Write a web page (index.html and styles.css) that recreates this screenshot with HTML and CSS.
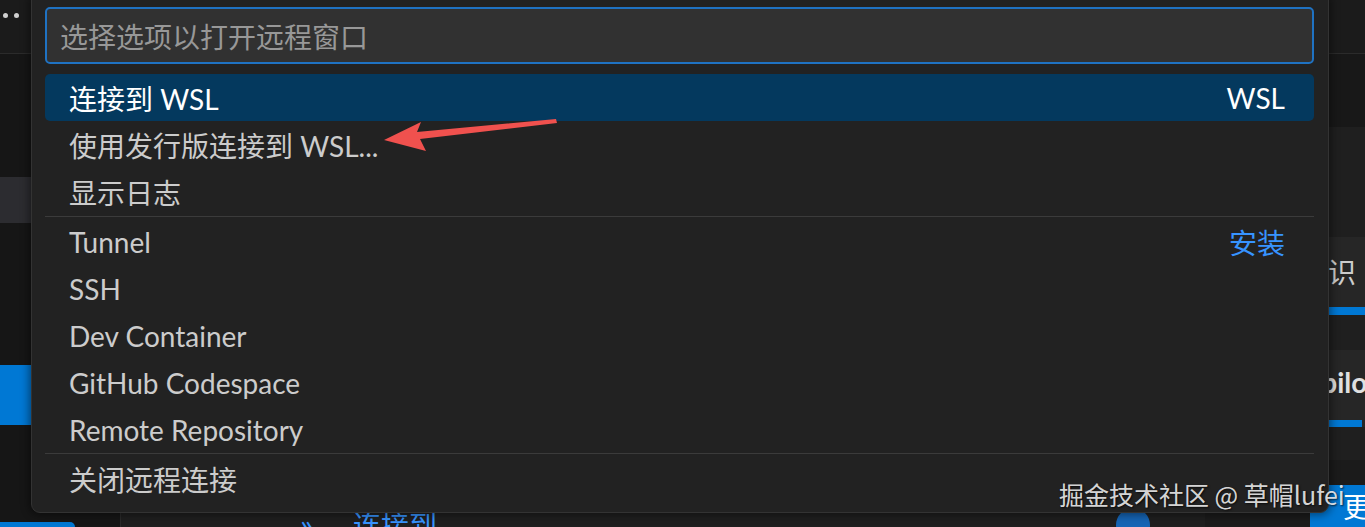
FILE: index.html
```html
<!DOCTYPE html>
<html lang="zh-CN">
<head>
<meta charset="utf-8">
<title>Remote Quick Pick</title>
<link rel="stylesheet" href="styles.css">
</head>
<body>
<div class="app">
  <aside class="sidebar">
    <div class="sb-top"><span class="dot"></span><span class="dot"></span></div>
    <div class="sb-hover"></div>
    <div class="sb-active"></div>
    <div class="sb-btn"></div>
  </aside>
  <main class="editor">
    <div class="tabs"></div>
    <div class="editor-body">
      <div class="content">
        <div class="link-row"><span class="chev">»</span><span class="link-text">连接到</span><span class="avatar"></span></div>
      </div>
      <div class="right-pane">
        <div class="rp-top"></div>
        <div class="rp-card c1"><div class="rp-text">知识</div><div class="rp-bar"></div></div>
        <div class="rp-card c2"><div class="rp-text bold">Copilot</div><div class="rp-bar short"></div></div>
        <div class="rp-card c3"><div class="rp-btn">更新</div></div>
      </div>
    </div>
  </main>
</div>

<div class="quickpick">
  <div class="qp-input">选择选项以打开远程窗口</div>
  <div class="qp-list">
    <div class="qp-row selected"><span class="label">连接到 WSL</span><span class="kb">WSL</span></div>
    <div class="qp-row"><span class="label">使用发行版连接到 WSL...</span></div>
    <div class="qp-row"><span class="label">显示日志</span></div>
    <div class="qp-sep"></div>
    <div class="qp-row"><span class="label">Tunnel</span><span class="action">安装</span></div>
    <div class="qp-row"><span class="label">SSH</span></div>
    <div class="qp-row"><span class="label">Dev Container</span></div>
    <div class="qp-row"><span class="label">GitHub Codespace</span></div>
    <div class="qp-row"><span class="label">Remote Repository</span></div>
    <div class="qp-sep second"></div>
    <div class="qp-row"><span class="label">关闭远程连接</span></div>
  </div>
</div>

<svg class="arrow" width="1365" height="527" viewBox="0 0 1365 527" xmlns="http://www.w3.org/2000/svg">
  <polygon points="384,140 421,122 417,132 556,119 557,123 420,139 426,151" fill="#f0514e"/>
</svg>

<div class="watermark">掘金技术社区 @ 草帽lufei</div>
</body>
</html>
```

FILE: styles.css
```css
* { box-sizing: border-box; }

html, body {
  margin: 0;
  padding: 0;
  width: 1365px;
  height: 527px;
  overflow: hidden;
  background: #1f1f1f;
  font-family: "Lato", "Noto Sans CJK SC", sans-serif;
}

.app {
  display: flex;
  width: 1365px;
  height: 527px;
  overflow: hidden;
}

/* ---------- sidebar (background app) ---------- */
.sidebar {
  width: 121px;
  flex: none;
  display: flex;
  flex-direction: column;
  background: #161616;
  border-right: 1px solid #2b2b2b;
}

.sb-top {
  height: 54px;
  flex: none;
  display: flex;
  gap: 6px;
  padding: 13px 0 0 3px;
  background: #1b1b1b;
  border-bottom: 1px solid #2b2b2b;
}

.dot {
  width: 5px;
  height: 5px;
  border-radius: 50%;
  background: #d0d0d0;
}

.sb-hover {
  margin-top: 123px;
  height: 46px;
  flex: none;
  background: #2c2c30;
}

.sb-active {
  margin-top: 142px;
  height: 60px;
  flex: none;
  background: #0078d4;
}

.sb-btn {
  margin-top: auto;
  width: 75px;
  height: 5px;
  flex: none;
  background: #0078d4;
  border-radius: 0 6px 0 0;
}

/* ---------- editor (background app) ---------- */
.editor {
  flex: 1;
  display: flex;
  flex-direction: column;
  min-width: 0;
}

.tabs {
  height: 54px;
  flex: none;
  background: #1b1b1b;
  border-bottom: 1px solid #2b2b2b;
}

.editor-body {
  flex: 1;
  display: flex;
  min-height: 0;
  overflow: hidden;
}

.content {
  flex: 1;
  background: #1f1f1f;
  padding: 451px 0 0 179px;
  overflow: hidden;
}

.link-row {
  display: flex;
  align-items: flex-start;
  font-size: 28px;
  line-height: 40px;
  color: #3794ff;
}

.chev { font-size: 32px; width: 53px; }

.avatar {
  margin: 3px 55px 0 auto;
  width: 34px;
  height: 34px;
  border-radius: 50%;
  background: #1665b5;
}

.right-pane {
  width: 160px;
  flex: none;
  display: flex;
  flex-direction: column;
  background: #1f1f1f;
  color: #cccccc;
  font-size: 28px;
}

.rp-top {
  height: 73px;
  flex: none;
  background: #181818;
}

.rp-card {
  flex: none;
  background: #262626;
  display: flex;
  flex-direction: column;
}

.rp-card.c1 { margin-top: 110px; height: 78px; }
.rp-card.c2 { margin-top: 35px; height: 77px; }
.rp-card.c3 { margin-top: 33px; height: 80px; padding-top: 25px; background: #1b1b1b; }

.rp-text {
  height: 70px;
  line-height: 70px;
  white-space: nowrap;
}

.c1 .rp-text { padding-left: 95px; }
.c2 .rp-text { padding-left: 82px; height: 70px; line-height: 64px; }

.rp-text.bold { font-weight: 700; color: #e0e0e0; }

.rp-bar {
  height: 8px;
  background: #0078d4;
}

.rp-bar.short {
  height: 7px;
  margin-right: 3px;
  margin-left: 124px;
}

.rp-btn {
  margin-left: 105px;
  height: 50px;
  padding-left: 33px;
  line-height: 44px;
  background: #0078d4;
  color: #ffffff;
  border-radius: 8px 0 0 8px;
  white-space: nowrap;
}

/* ---------- quick pick overlay ---------- */
.quickpick {
  position: absolute;
  left: 31px;
  top: -1px;
  width: 1298px;
  height: 514px;
  background: #222222;
  border: 1px solid #333333;
  border-radius: 0 0 9px 9px;
  box-shadow: 0 0 8px 2px rgba(0, 0, 0, 0.45);
  padding: 7px 14px 0 13px;
}

.qp-input {
  height: 57px;
  border: 2px solid #1f72c2;
  border-radius: 5px;
  background: #313131;
  color: #989898;
  font-size: 28px;
  line-height: 53px;
  padding: 2px 0 0 13px;
}

.qp-list {
  margin-top: 10px;
  display: flex;
  flex-direction: column;
}

.qp-row {
  height: 47px;
  display: flex;
  align-items: center;
  justify-content: space-between;
  padding: 0 29px 0 24px;
  font-size: 28px;
  color: #cccccc;
  border-radius: 5px;
  white-space: nowrap;
}

.qp-row.selected {
  background: #04395e;
  color: #ffffff;
}

.qp-row .kb { color: #ffffff; }

.qp-row .action { color: #3794ff; }

.qp-sep {
  height: 1px;
  margin: 1px 0 1px;
  background: #3b3b3b;
}

.qp-sep.second { margin: 0 0 1px; }

/* ---------- annotation overlays ---------- */
.arrow {
  position: absolute;
  left: 0;
  top: 0;
  pointer-events: none;
}

.watermark {
  position: absolute;
  left: 1059px;
  top: 475px;
  font-family: "Noto Sans CJK SC", sans-serif;
  font-size: 25px;
  line-height: 38px;
  color: rgba(240, 240, 240, 0.9);
  text-shadow: 1px 1px 2px rgba(0, 0, 0, 0.7);
  white-space: nowrap;
}
```
